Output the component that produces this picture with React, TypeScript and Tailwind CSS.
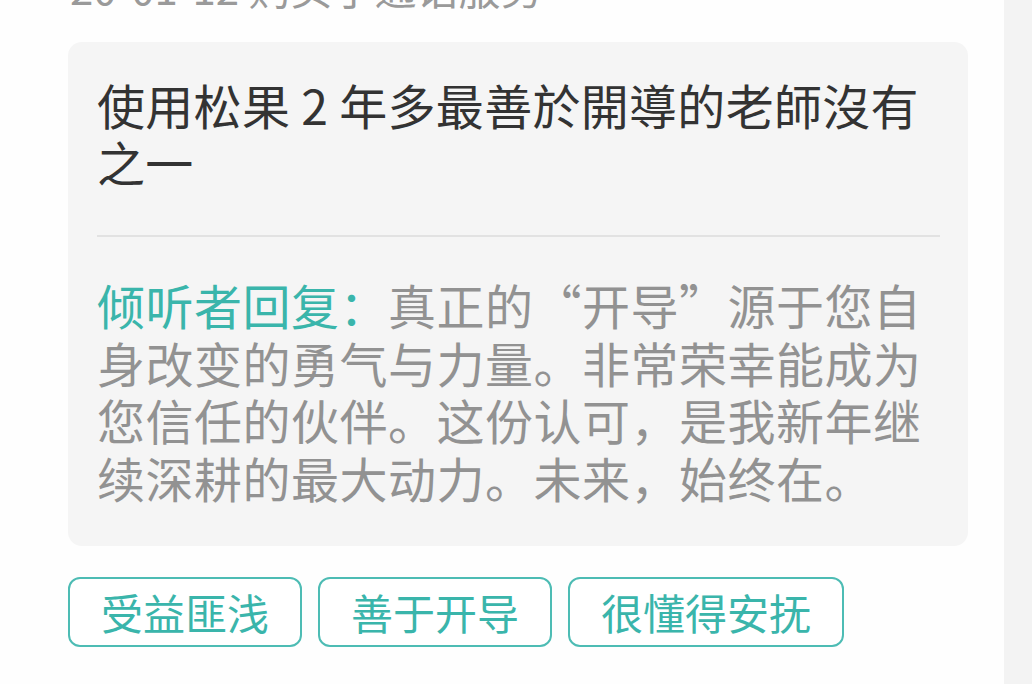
import React from 'react';

const tags = ['受益匪浅', '善于开导', '很懂得安抚'];

export default function App() {
  return (
    <div
      className="flex h-[684px] w-[1032px] overflow-hidden bg-[#fefefe]"
      style={{ fontFamily: '"Noto Sans CJK SC", "Noto Sans", sans-serif' }}
    >
      <div className="flex-1 pl-[68px] pr-[36px]">
        {/* 上一条记录，被顶部截断 */}
        <div className="mt-[-34px] h-[42px] pl-[2px] text-[42px] leading-[42px] text-[#9a9a9a] whitespace-nowrap">
          20-01-12 购买了通话服务
        </div>

        {/* 评价卡片 */}
        <div className="mt-[34px] rounded-[14px] bg-[#f5f5f5] pl-[29px] pr-[28px] pt-[34px] pb-[40px]">
          <p className="text-[48px] leading-[57px] tracking-[0.3px] text-[#333333]">
            使用松果 2 年多最善於開導的老師沒有之一
          </p>
          <div className="mt-[45px] mb-[39px] h-[2px] bg-[#e2e2e2]" />
          <p className="text-[48px] leading-[57.5px] tracking-[0.5px] text-[#929292]">
            <span className="text-[#3ab5ab]">倾听者回复：</span>
            真正的“开导”源于您自身改变的勇气与力量。非常荣幸能成为您信任的伙伴。这份认可，是我新年继续深耕的最大动力。未来，始终在。
          </p>
        </div>

        {/* 标签 */}
        <div className="mt-[31px] flex gap-[16px]">
          {tags.map((t) => (
            <div
              key={t}
              className="flex h-[70px] items-center rounded-[12px] border-2 border-[#4dbcb4] bg-white px-[31px] text-[42px] leading-none text-[#3ab5ab]"
            >
              {t}
            </div>
          ))}
        </div>
      </div>
      <div className="w-[28px] bg-[#f3f3f3]" />
    </div>
  );
}
